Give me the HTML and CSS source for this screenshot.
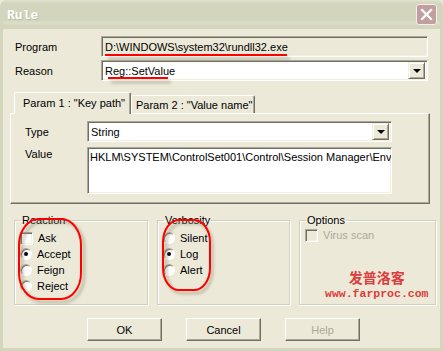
FILE: index.html
```html
<!DOCTYPE html>
<html lang="en">
<head>
  <meta charset="UTF-8" />
  <title>Rule</title>
  <link rel="stylesheet" href="styles.css">
</head>
<body>

  <div class="window">
    <div class="titlebar">
      <span class="title">Rule</span>
      <span class="close-btn">
        <svg width="13" height="13" viewBox="0 0 13 13">
          <path d="M2 2 L11 11 M11 2 L2 11" stroke="#fff" stroke-width="2.2" stroke-linecap="square"/>
        </svg>
      </span>
    </div>

    <div class="client">
      <div class="form-grid">
        <span class="label">Program</span>
        <div class="field readonly">D:\WINDOWS\system32\rundll32.exe</div>
        <span class="label">Reason</span>
        <div class="field combo">
          <span class="combo-text">Reg::SetValue</span>
          <span class="drop-btn"><span class="arrow"></span></span>
        </div>
      </div>

      <div class="tabs">
        <div class="tab-strip">
          <div class="tab active">Param 1 : "Key path"</div>
          <div class="tab">Param 2 : "Value name"</div>
        </div>
        <div class="tab-pane">
          <span class="label">Type</span>
          <div class="field combo">
            <span class="combo-text">String</span>
            <span class="drop-btn"><span class="arrow"></span></span>
          </div>
          <span class="label label-top">Value</span>
          <div class="field textarea">HKLM\SYSTEM\ControlSet001\Control\Session Manager\Env</div>
        </div>
      </div>

      <div class="groups">
        <fieldset class="group">
          <legend>Reaction</legend>
          <div class="option"><span class="check"></span>Ask</div>
          <div class="option"><span class="radio checked"></span>Accept</div>
          <div class="option"><span class="radio"></span>Feign</div>
          <div class="option"><span class="radio"></span>Reject</div>
        </fieldset>
        <fieldset class="group">
          <legend>Verbosity</legend>
          <div class="option"><span class="radio"></span>Silent</div>
          <div class="option"><span class="radio checked"></span>Log</div>
          <div class="option"><span class="radio"></span>Alert</div>
        </fieldset>
        <fieldset class="group options">
          <legend>Options</legend>
          <div class="option disabled"><span class="check"></span>Virus scan</div>
          <div class="watermark">
            <div class="wm-cn">发普洛客</div>
            <div class="wm-url">www.farproc.com</div>
          </div>
        </fieldset>
      </div>

      <div class="buttons">
        <button class="btn">OK</button>
        <button class="btn">Cancel</button>
        <button class="btn disabled">Help</button>
      </div>
    </div>

    <!-- red marks drawn over the dialog -->
    <svg class="marks" width="443" height="351" viewBox="0 0 443 351">
      <defs>
        <filter id="shade" x="-20%" y="-20%" width="140%" height="140%">
          <feGaussianBlur stdDeviation="1.5"/>
        </filter>
      </defs>
      <g stroke="#8a8a70" stroke-width="3" fill="none" opacity="0.45" filter="url(#shade)">
        <line x1="108" y1="59" x2="290" y2="59"/>
        <line x1="111" y1="82" x2="171" y2="82"/>
        <rect x="22" y="222" width="62" height="80" rx="20" ry="26"/>
        <rect x="166" y="223" width="46" height="70" rx="16" ry="22"/>
      </g>
      <g stroke="#ff0000" stroke-width="2" fill="none">
        <line x1="105" y1="55" x2="287" y2="55"/>
        <line x1="108" y1="78" x2="168" y2="78"/>
        <rect x="19" y="219" width="62" height="80" rx="20" ry="26"/>
        <rect x="163" y="220" width="47" height="70" rx="16" ry="22"/>
      </g>
    </svg>
  </div>

</body>
</html>
```

FILE: styles.css
```css
body {
  margin: 0;
  font-family: 'Liberation Sans', Arial, sans-serif;
  font-size: 11px;
  color: #000;
  background: #ece9d8;
}

.window {
  position: relative;
  width: 443px;
  height: 351px;
  box-sizing: border-box;
  padding: 0 3px 3px 3px;
  background: #d3d5bd;
  border-radius: 7px 7px 0 0;
  overflow: hidden;
}

.titlebar {
  height: 29px;
  display: flex;
  align-items: center;
  justify-content: space-between;
  padding: 0 3px 0 4px;
  background: linear-gradient(#e2e3d0 0, #d3d5bd 3px, #d3d5bd 20px, #dcdec9 23px, #d3d5bd 26px);
}

.title {
  font-family: 'Liberation Mono', monospace;
  font-weight: bold;
  font-size: 13px;
  color: #fff;
  text-shadow: 1px 1px 0 #b9bba4;
  margin-top: 1px;
}

.close-btn {
  width: 19px;
  height: 19px;
  border: 1px solid #f4eeee;
  border-radius: 3px;
  background: #c29f9f;
  display: flex;
  align-items: center;
  justify-content: center;
  margin-top: -1px;
}

.client {
  height: 319px;
  background: #ece9d8;
  padding-top: 7px;
  box-sizing: border-box;
}

/* sunken edit look */
.field {
  box-sizing: border-box;
  height: 21px;
  border: 1px solid;
  border-color: #aca899 #fff #fff #aca899;
  box-shadow: inset 1px 1px 0 #716f64, inset -1px -1px 0 #f1efe2;
  background: #fff;
  padding: 0 3px;
  display: flex;
  align-items: center;
  white-space: nowrap;
  overflow: hidden;
}

.field.readonly {
  background: #ece9d8;
}

.combo {
  padding-right: 2px;
  justify-content: space-between;
}

.drop-btn {
  width: 17px;
  height: 17px;
  box-sizing: border-box;
  background: #ece9d8;
  border: 1px solid;
  border-color: #f1efe2 #716f64 #716f64 #f1efe2;
  box-shadow: inset 1px 1px 0 #fff, inset -1px -1px 0 #aca899;
  display: flex;
  align-items: center;
  justify-content: center;
}

.arrow {
  width: 0;
  height: 0;
  border-left: 4px solid transparent;
  border-right: 4px solid transparent;
  border-top: 4px solid #000;
}

.form-grid {
  display: grid;
  grid-template-columns: 86px 327px;
  row-gap: 3px;
  padding-left: 12px;
  align-items: center;
}

.tabs {
  margin: 11px 0 0 7px;
  width: 420px;
}

.tab-strip {
  display: flex;
  align-items: flex-end;
  padding-left: 4px;
  height: 21px;
}

.tab {
  box-sizing: border-box;
  height: 18px;
  width: 124px;
  padding-left: 4px;
  display: flex;
  align-items: center;
  white-space: nowrap;
  border: 1px solid;
  border-bottom: none;
  border-color: #fff #716f64 transparent #fff;
  box-shadow: inset -1px 0 0 #aca899;
  border-radius: 2px 2px 0 0;
  background: #ece9d8;
}

.tab.active {
  position: relative;
  z-index: 1;
  width: 117px;
  height: 22px;
  margin-bottom: -1px;
  padding-left: 8px;
  padding-bottom: 2px;
}

.tab-pane {
  box-sizing: border-box;
  height: 91px;
  border: 1px solid;
  border-color: #fff #716f64 #716f64 #fff;
  box-shadow: inset -1px -1px 0 #aca899;
  padding: 7px 0 0 14px;
  display: grid;
  grid-template-columns: 62px 305px;
  grid-template-rows: 21px 47px;
  row-gap: 5px;
  align-items: center;
}

.tab-pane .textarea {
  height: 47px;
  align-items: flex-start;
  padding: 3px 2px;
}

.label-top {
  align-self: start;
  padding-top: 1px;
}

.groups {
  display: flex;
  gap: 9px;
  margin: 10px 0 0 11px;
}

.group {
  box-sizing: border-box;
  width: 134px;
  height: 91px;
  margin: 0;
  padding: 3px 6px 0 5px;
  border: 1px solid #d0d0bf;
  box-shadow: 1px 1px 0 #fff, inset 1px 1px 0 #fff;
  display: flex;
  flex-direction: column;
}

.group:nth-child(2) {
  width: 133px;
}

.group legend {
  padding: 0 1px;
  margin-left: 1px;
  line-height: 13px;
}

.option {
  height: 16px;
  display: flex;
  align-items: center;
  gap: 5px;
}

.option.disabled {
  color: #aca899;
  margin-top: -3px;
}

.radio {
  width: 12px;
  height: 12px;
  box-sizing: border-box;
  border-radius: 50%;
  border: 1px solid;
  border-color: #aca899 #fff #fff #aca899;
  background: #fff;
  box-shadow: inset 1px 1px 0 #716f64;
  display: flex;
  align-items: center;
  justify-content: center;
}

.radio.checked::after {
  content: "";
  width: 4px;
  height: 4px;
  border-radius: 50%;
  background: #000;
}

.check {
  width: 13px;
  height: 13px;
  box-sizing: border-box;
  border: 1px solid;
  border-color: #aca899 #fff #fff #aca899;
  box-shadow: inset 1px 1px 0 #716f64, inset -1px -1px 0 #f1efe2;
  background: #fff;
}

.option.disabled .check {
  background: #ece9d8;
}

.watermark {
  margin-top: auto;
  padding: 0 0 5px 20px;
  text-align: center;
  color: #dc3c3c;
  font-weight: bold;
}

.wm-cn {
  font-family: 'Noto Sans CJK SC', sans-serif;
  font-size: 14px;
  line-height: 15px;
  margin-bottom: 4px;
}

.wm-url {
  font-family: 'Liberation Mono', monospace;
  font-size: 11.5px;
  line-height: 10px;
}

.buttons {
  display: flex;
  gap: 24px;
  padding-left: 84px;
  margin-top: 13px;
}

.btn {
  width: 75px;
  height: 23px;
  font-family: 'Liberation Sans', Arial, sans-serif;
  font-size: 11px;
  color: #000;
  background: #ece9d8;
  border: 1px solid;
  border-color: #fff #716f64 #716f64 #fff;
  box-shadow: inset -1px -1px 0 #aca899;
  padding: 0;
}

.btn.disabled {
  color: #aca899;
}

.marks {
  position: absolute;
  top: 0;
  left: 0;
  pointer-events: none;
}
```
